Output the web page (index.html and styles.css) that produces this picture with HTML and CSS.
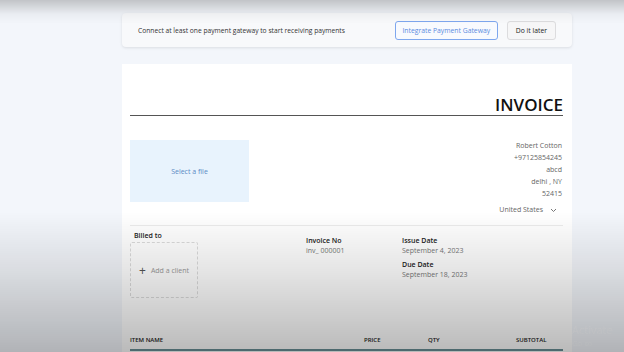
FILE: index.html
```html
<!DOCTYPE html>
<html lang="en">
<head>
  <meta charset="UTF-8">
  <title>Invoice</title>
  <link rel="stylesheet" href="styles.css">
</head>
<body>
  <div class="page">
    <div class="banner">
      <span class="banner-text">Connect at least one payment gateway to start receiving payments</span>
      <div class="banner-actions">
        <button class="btn btn-primary">Integrate Payment Gateway</button>
        <button class="btn">Do it later</button>
      </div>
    </div>

    <div class="invoice">
      <h1 class="invoice-title">INVOICE</h1>

      <div class="invoice-top">
        <div class="logo-drop">Select a file</div>
        <div class="sender">
          <div>Robert Cotton</div>
          <div>+97125854245</div>
          <div>abcd</div>
          <div>delhi , NY</div>
          <div>52415</div>
          <div class="country">
            United States
            <svg width="7" height="5" viewBox="0 0 7 5"><path d="M1 1l2.5 2.5L6 1" fill="none" stroke="#777" stroke-width="1"/></svg>
          </div>
        </div>
      </div>

      <div class="invoice-meta">
        <div class="billed">
          <div class="label">Billed to</div>
          <div class="add-client">
            <span class="plus">+</span> Add a client
          </div>
        </div>
        <div class="meta-col meta-no">
          <div class="label">Invoice No</div>
          <div class="value">inv_ 000001</div>
        </div>
        <div class="meta-col">
          <div class="label">Issue Date</div>
          <div class="value">September 4, 2023</div>
          <div class="label label-gap">Due Date</div>
          <div class="value">September 18, 2023</div>
        </div>
      </div>

      <table class="items">
        <thead>
          <tr>
            <th class="col-name">ITEM NAME</th>
            <th class="col-price">PRICE</th>
            <th class="col-qty">QTY</th>
            <th class="col-sub">SUBTOTAL</th>
          </tr>
        </thead>
      </table>
    </div>
  </div>

  <div class="watermark">
    <div class="wm-title">Activate</div>
    <div class="wm-sub">Go to</div>
  </div>
</body>
</html>
```

FILE: styles.css
```css
body {
  margin: 0;
  font-family: "Open Sans", "Noto Sans", sans-serif;
  background-color: #f3f6fb;
  color: #333;
  height: 352px;
  overflow: hidden;
}

/* dark video-like vignette over the capture */
body::after {
  content: "";
  position: fixed;
  inset: 0;
  pointer-events: none;
  background: linear-gradient(to bottom,
    rgba(0,0,0,0.2) 0px,
    rgba(0,0,0,0.04) 14px,
    rgba(0,0,0,0) 24px,
    rgba(0,0,0,0) 212px,
    rgba(0,0,0,0.1) 270px,
    rgba(0,0,0,0.27) 352px);
}

.page {
  width: 450px;
  margin-left: 122px;
  padding-top: 13px;
}

.banner {
  height: 34px;
  display: flex;
  align-items: center;
  justify-content: space-between;
  padding: 0 16px;
  background: #f8f9fb;
  border-radius: 4px;
  box-shadow: 0 1px 3px rgba(0,0,0,0.1);
}

.banner-text {
  font-size: 6.7px;
  color: #333;
}

.banner-actions {
  display: flex;
  gap: 9px;
}

.btn {
  height: 19px;
  padding: 0 8px;
  font-family: inherit;
  font-size: 6.8px;
  color: #222;
  background: #f6f6f7;
  border: 1px solid #dcdcde;
  border-radius: 3px;
  white-space: nowrap;
}

.btn-primary {
  color: #5b8be0;
  background: #f8fafe;
  border-color: #7ea7ee;
  width: 103px;
  padding: 0;
}

.invoice {
  margin-top: 17px;
  background: white;
  padding: 0 9px 0 8px;
  height: 300px;
}

.invoice-title {
  margin: 0;
  padding-top: 30px;
  height: 21px;
  line-height: 21px;
  text-align: right;
  font-size: 17px;
  font-weight: 600;
  color: #111;
  border-bottom: 1px solid #555;
}

.invoice-top {
  display: flex;
  justify-content: space-between;
  margin-top: 24px;
  padding-bottom: 9px;
  border-bottom: 1px solid #ececec;
}

.logo-drop {
  width: 119px;
  height: 62px;
  background: #e8f3fd;
  display: flex;
  align-items: center;
  justify-content: center;
  font-size: 7px;
  color: #5a8ac4;
}

.sender {
  text-align: right;
  font-size: 7px;
  line-height: 12px;
  color: #666;
  padding-right: 1px;
}

.country {
  margin-top: 4px;
  padding-right: 5px;
  display: flex;
  align-items: center;
  gap: 7px;
}

.invoice-meta {
  display: flex;
  padding-top: 5px;
  font-size: 7px;
}

.label {
  font-weight: 600;
  color: #222;
}

.value {
  color: #777;
  margin-top: 1px;
}

.label-gap {
  margin-top: 5px;
}

.billed {
  width: 176px;
}

.billed .label {
  padding-left: 4px;
}

.add-client {
  width: 66px;
  height: 54px;
  margin-top: 2px;
  border: 1px dashed #dcdcdc;
  border-radius: 2px;
  display: flex;
  align-items: center;
  justify-content: center;
  gap: 5px;
  color: #999;
}

.plus {
  font-size: 12px;
  color: #555;
}

.meta-col {
  padding-top: 5px;
}

.meta-no {
  width: 96px;
}

.items {
  width: 100%;
  margin-top: 38px;
  border-collapse: collapse;
}

.items th {
  font-size: 6px;
  font-weight: 600;
  text-align: left;
  color: #222;
  padding: 0 0 5px 0;
  border-bottom: 2px solid #6a8f96;
}

.col-name { width: 234px; }
.col-price { width: 64px; }
.col-qty { width: 88px; }

.watermark {
  position: fixed;
  left: 572px;
  top: 322px;
  color: rgba(255,255,255,0.35);
  white-space: nowrap;
}

.wm-title {
  font-size: 11px;
}

.wm-sub {
  font-size: 8px;
}
```
